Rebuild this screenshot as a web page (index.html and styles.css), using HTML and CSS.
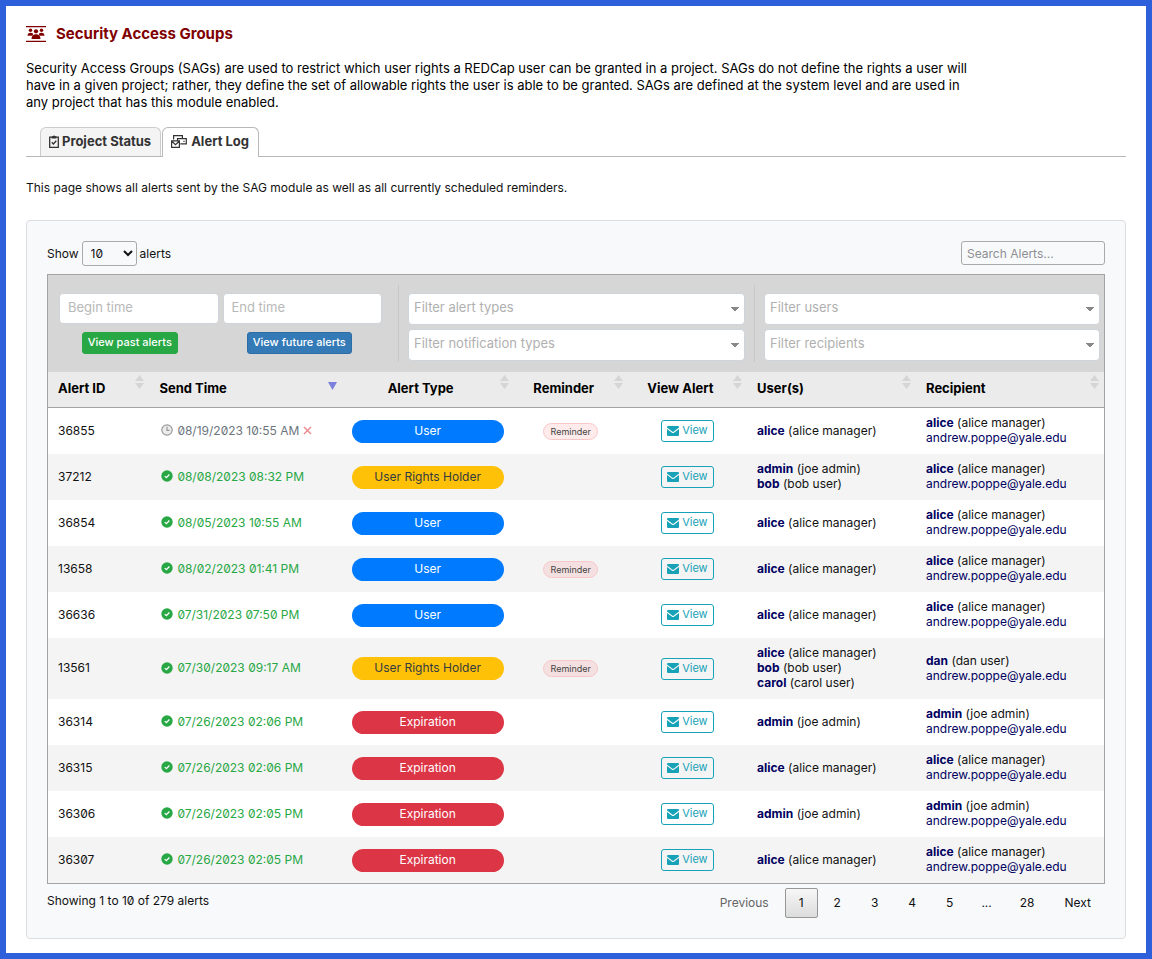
FILE: index.html
```html
<!DOCTYPE html>
<html lang="en">
<head>
<meta charset="utf-8">
<title>Security Access Groups</title>
<link rel="stylesheet" href="styles.css">
</head>
<body>
<svg class="sprite" aria-hidden="true">
  <symbol id="i-groups" viewBox="0 0 20 16">
    <path d="M0 0h20v1.300H0zM0 14.700h20V16H0z"/>
    <circle cx="4.500" cy="4.300" r="1.700"/><circle cx="15.500" cy="4.300" r="1.700"/><circle cx="10" cy="5.300" r="2.100"/>
    <path d="M1.500 9.700C1.500 7.800 2.700 6.700 4.500 6.700c1 0 1.900.3 2.500.9.100 1-.2 1.500-.8 2.100zM18.500 9.700c0-1.900-1.200-3-3-3-1 0-1.900.3-2.500.9-.1 1 .2 1.500.8 2.100zM5.500 13c0-3 1.600-4.800 4.500-4.800s4.500 1.800 4.500 4.800z"/>
  </symbol>
  <symbol id="i-clip" viewBox="0 0 10 13">
    <path d="M.7 2.200h8.600v10.100H.7zM2.800 7.300l1.600 1.700 2.900-3.300" fill="none" stroke="currentColor" stroke-width="1.300"/>
    <path d="M2.600 1.200h1.200a1.300 1.300 0 0 1 2.400 0h1.200v2.400H2.600z"/>
  </symbol>
  <symbol id="i-mails" viewBox="0 0 16 13">
    <path d="M2.600 4.500V.7h8.800v3M9.300 8.900h6V3.700H6.500v1.500M13 5.700v1.200M.6 5.900h7.800v6.400H.6zM.8 6.300l3.700 3.400 3.700-3.400" fill="none" stroke="currentColor" stroke-width="1.200"/>
  </symbol>
  <symbol id="i-clock" viewBox="0 0 12 12">
    <circle cx="6" cy="6" r="5.200" fill="#ececec" stroke="currentColor" stroke-width="1.200"/>
    <path d="M6 2.800V6.300h2.500" fill="none" stroke="currentColor" stroke-width="1.200"/>
  </symbol>
  <symbol id="i-check" viewBox="0 0 12 12">
    <circle cx="6" cy="6" r="5.700"/><path d="M3.700 6.100l1.700 1.600 3-3.200" fill="none" stroke="#fff" stroke-width="1.300"/>
  </symbol>
  <symbol id="i-x" viewBox="0 0 9 9"><path d="M1 1l7 7M8 1L1 8" fill="none" stroke="currentColor" stroke-width="1.500"/></symbol>
  <symbol id="i-mail" viewBox="0 0 12 10">
    <path d="M1 0h10a1 1 0 0 1 1 1v.5L6.800 5.600a1.300 1.300 0 0 1-1.600 0L0 1.500V1a1 1 0 0 1 1-1z"/>
    <path d="M0 2.900l4.700 3.700a2.100 2.100 0 0 0 2.600 0L12 2.900V9a1 1 0 0 1-1 1H1a1 1 0 0 1-1-1z"/>
  </symbol>
  <symbol id="i-sort" viewBox="0 0 9 14"><path d="M4.500 0L9 6H0zM0 8h9l-4.500 6z"/></symbol>
  <symbol id="i-down" viewBox="0 0 9 8"><path d="M0 0h9L4.500 8z"/></symbol>
</svg>

<main class="page">
  <h1 class="title"><svg class="title-icon"><use href="#i-groups"/></svg>Security Access Groups</h1>
  <p class="intro">Security Access Groups (SAGs) are used to restrict which user rights a REDCap user can be granted in a project. SAGs do not define the rights a user will have in a given project; rather, they define the set of allowable rights the user is able to be granted. SAGs are defined at the system level and are used in any project that has this module enabled.</p>

  <nav class="tabs">
    <a class="tab" href="#status"><svg class="clip-icon"><use href="#i-clip"/></svg>Project Status</a>
    <a class="tab tab-active" href="#alerts"><svg class="mails-icon"><use href="#i-mails"/></svg>Alert Log</a>
  </nav>
  <p class="note">This page shows all alerts sent by the SAG module as well as all currently scheduled reminders.</p>

  <section class="card">
    <div class="toolbar">
      <label class="length">Show <select class="length-select"><option>10</option><option>25</option><option>50</option></select> alerts</label>
      <input class="search" type="search" placeholder="Search Alerts..." aria-label="Search alerts">
    </div>

    <div class="grid-frame">
      <div class="filters">
        <div class="filter-group times">
          <input class="field" type="text" placeholder="Begin time" aria-label="Begin time">
          <input class="field" type="text" placeholder="End time" aria-label="End time">
          <button class="btn btn-past" type="button">View past alerts</button>
          <button class="btn btn-future" type="button">View future alerts</button>
        </div>
        <div class="filter-group">
          <select class="field picker" aria-label="Filter alert types"><option>Filter alert types</option></select>
          <select class="field picker" aria-label="Filter notification types"><option>Filter notification types</option></select>
        </div>
        <div class="filter-group">
          <select class="field picker" aria-label="Filter users"><option>Filter users</option></select>
          <select class="field picker" aria-label="Filter recipients"><option>Filter recipients</option></select>
        </div>
      </div>

      <table class="alerts">
        <colgroup><col class="c-id"><col class="c-time"><col class="c-type"><col class="c-rem"><col class="c-view"><col class="c-users"><col class="c-rec"></colgroup>
        <thead>
          <tr>
            <th>Alert ID<svg class="sort"><use href="#i-sort"/></svg></th>
            <th>Send Time<svg class="sort sort-on"><use href="#i-down"/></svg></th>
            <th class="mid">Alert Type<svg class="sort"><use href="#i-sort"/></svg></th>
            <th class="mid">Reminder<svg class="sort"><use href="#i-sort"/></svg></th>
            <th class="mid">View Alert<svg class="sort"><use href="#i-sort"/></svg></th>
            <th>User(s)<svg class="sort"><use href="#i-sort"/></svg></th>
            <th>Recipient<svg class="sort"><use href="#i-sort"/></svg></th>
          </tr>
        </thead>
        <tbody>
          <tr><td>36855</td><td><span class="when pending"><svg class="state"><use href="#i-clock"/></svg>08/19/2023 10:55 AM<button class="cancel" type="button" aria-label="Cancel reminder"><svg class="x-icon"><use href="#i-x"/></svg></button></span></td><td><span class="pill user">User</span></td><td class="mid"><span class="badge">Reminder</span></td><td class="mid"><button class="view" type="button"><svg class="mail"><use href="#i-mail"/></svg>View</button></td><td><b>alice</b> (alice manager)</td><td><b>alice</b> (alice manager)<br><a href="mailto:andrew.poppe@yale.edu">andrew.poppe@yale.edu</a></td></tr>
          <tr><td>37212</td><td><span class="when"><svg class="state"><use href="#i-check"/></svg>08/08/2023 08:32 PM</span></td><td><span class="pill holder">User Rights Holder</span></td><td></td><td class="mid"><button class="view" type="button"><svg class="mail"><use href="#i-mail"/></svg>View</button></td><td><b>admin</b> (joe admin)<br><b>bob</b> (bob user)</td><td><b>alice</b> (alice manager)<br><a href="mailto:andrew.poppe@yale.edu">andrew.poppe@yale.edu</a></td></tr>
          <tr><td>36854</td><td><span class="when"><svg class="state"><use href="#i-check"/></svg>08/05/2023 10:55 AM</span></td><td><span class="pill user">User</span></td><td></td><td class="mid"><button class="view" type="button"><svg class="mail"><use href="#i-mail"/></svg>View</button></td><td><b>alice</b> (alice manager)</td><td><b>alice</b> (alice manager)<br><a href="mailto:andrew.poppe@yale.edu">andrew.poppe@yale.edu</a></td></tr>
          <tr><td>13658</td><td><span class="when"><svg class="state"><use href="#i-check"/></svg>08/02/2023 01:41 PM</span></td><td><span class="pill user">User</span></td><td class="mid"><span class="badge">Reminder</span></td><td class="mid"><button class="view" type="button"><svg class="mail"><use href="#i-mail"/></svg>View</button></td><td><b>alice</b> (alice manager)</td><td><b>alice</b> (alice manager)<br><a href="mailto:andrew.poppe@yale.edu">andrew.poppe@yale.edu</a></td></tr>
          <tr><td>36636</td><td><span class="when"><svg class="state"><use href="#i-check"/></svg>07/31/2023 07:50 PM</span></td><td><span class="pill user">User</span></td><td></td><td class="mid"><button class="view" type="button"><svg class="mail"><use href="#i-mail"/></svg>View</button></td><td><b>alice</b> (alice manager)</td><td><b>alice</b> (alice manager)<br><a href="mailto:andrew.poppe@yale.edu">andrew.poppe@yale.edu</a></td></tr>
          <tr><td>13561</td><td><span class="when"><svg class="state"><use href="#i-check"/></svg>07/30/2023 09:17 AM</span></td><td><span class="pill holder">User Rights Holder</span></td><td class="mid"><span class="badge">Reminder</span></td><td class="mid"><button class="view" type="button"><svg class="mail"><use href="#i-mail"/></svg>View</button></td><td><b>alice</b> (alice manager)<br><b>bob</b> (bob user)<br><b>carol</b> (carol user)</td><td><b>dan</b> (dan user)<br><a href="mailto:andrew.poppe@yale.edu">andrew.poppe@yale.edu</a></td></tr>
          <tr><td>36314</td><td><span class="when"><svg class="state"><use href="#i-check"/></svg>07/26/2023 02:06 PM</span></td><td><span class="pill expired">Expiration</span></td><td></td><td class="mid"><button class="view" type="button"><svg class="mail"><use href="#i-mail"/></svg>View</button></td><td><b>admin</b> (joe admin)</td><td><b>admin</b> (joe admin)<br><a href="mailto:andrew.poppe@yale.edu">andrew.poppe@yale.edu</a></td></tr>
          <tr><td>36315</td><td><span class="when"><svg class="state"><use href="#i-check"/></svg>07/26/2023 02:06 PM</span></td><td><span class="pill expired">Expiration</span></td><td></td><td class="mid"><button class="view" type="button"><svg class="mail"><use href="#i-mail"/></svg>View</button></td><td><b>alice</b> (alice manager)</td><td><b>alice</b> (alice manager)<br><a href="mailto:andrew.poppe@yale.edu">andrew.poppe@yale.edu</a></td></tr>
          <tr><td>36306</td><td><span class="when"><svg class="state"><use href="#i-check"/></svg>07/26/2023 02:05 PM</span></td><td><span class="pill expired">Expiration</span></td><td></td><td class="mid"><button class="view" type="button"><svg class="mail"><use href="#i-mail"/></svg>View</button></td><td><b>admin</b> (joe admin)</td><td><b>admin</b> (joe admin)<br><a href="mailto:andrew.poppe@yale.edu">andrew.poppe@yale.edu</a></td></tr>
          <tr><td>36307</td><td><span class="when"><svg class="state"><use href="#i-check"/></svg>07/26/2023 02:05 PM</span></td><td><span class="pill expired">Expiration</span></td><td></td><td class="mid"><button class="view" type="button"><svg class="mail"><use href="#i-mail"/></svg>View</button></td><td><b>alice</b> (alice manager)</td><td><b>alice</b> (alice manager)<br><a href="mailto:andrew.poppe@yale.edu">andrew.poppe@yale.edu</a></td></tr>
        </tbody>
      </table>
    </div>

    <div class="footer">
      <p class="info">Showing 1 to 10 of 279 alerts</p>
      <nav class="pager" aria-label="Pages">
        <a class="pg pg-off">Previous</a>
        <a class="pg pg-on" href="#p1">1</a>
        <a class="pg" href="#p2">2</a>
        <a class="pg" href="#p3">3</a>
        <a class="pg" href="#p4">4</a>
        <a class="pg" href="#p5">5</a>
        <span class="dots">...</span>
        <a class="pg" href="#p28">28</a>
        <a class="pg" href="#next">Next</a>
      </nav>
    </div>
  </section>
</main>
</body>
</html>
```
FILE: styles.css
```css
* { box-sizing: border-box; }

body {
  margin: 0;
  min-height: 100vh;
  border: 6px solid #2f60db;
  background: #fff;
  color: #111;
  font: 12px/15px Inter, "Noto Sans", sans-serif;
  font-feature-settings: "zero";
}

input, select, button { font: inherit; font-feature-settings: inherit; margin: 0; }
a { color: inherit; text-decoration: none; }
svg { fill: currentColor; flex: none; }
p { margin: 0; }
.sprite { display: none; }

.page { padding: 18px 20px 14px; }

.title {
  display: flex;
  align-items: center;
  gap: 10px;
  margin: 0;
  color: #800000;
  font-size: 15px;
  line-height: 20px;
  font-weight: 700;
}
.title-icon { width: 20px; height: 16px; }

.intro {
  max-width: 950px;
  margin-top: 16px;
  font-size: 13px;
  line-height: 17px;
  color: #000;
}

.tabs {
  display: flex;
  align-items: flex-end;
  gap: 1px;
  margin-top: 16px;
  padding-left: 14px;
  border-bottom: 1px solid #b8b8b8;
}
.tab {
  display: flex;
  align-items: center;
  gap: 3px;
  height: 29px;
  padding: 0 9px 2px 8px;
  border: 1px solid #ccc;
  border-bottom: 0;
  border-radius: 6px 6px 0 0;
  background: #f4f4f4;
  color: #333;
  font-size: 13px;
  font-weight: 700;
}
.tab-active {
  gap: 4px;
  height: 30px;
  margin-bottom: -1px;
  padding-bottom: 3px;
  border-color: #b8b8b8;
  background: #fff;
}
.clip-icon { width: 10px; height: 13px; }
.mails-icon { width: 16px; height: 13px; }

.note { margin-top: 23px; }

.card {
  margin-top: 25px;
  padding: 20px;
  border: 1px solid #dcdde0;
  border-radius: 4px;
  background: #f8f9fb;
}

.toolbar {
  display: flex;
  align-items: flex-start;
  justify-content: space-between;
  margin-bottom: 8px;
}
.length { display: flex; align-items: center; gap: 3px; }
.length-select {
  width: 55px;
  height: 25px;
  padding: 0 0 0 4px;
  border: 1px solid #aaa;
  border-radius: 3px;
  background: transparent;
  color: #111;
}
.search {
  width: 144px;
  height: 24px;
  padding: 0 5px;
  border: 1px solid #aaa;
  border-radius: 3px;
  background: transparent;
}
.search::placeholder { color: #8d8f93; }

.grid-frame { border: 1px solid #a3a3a3; background: #fff; }

.filters {
  display: grid;
  grid-template-columns: 350fr 356fr 350fr;
  padding: 10px 0;
  background: #d6d6d6;
}
.filter-group {
  display: grid;
  gap: 4px;
  align-content: start;
  padding: 8px 9px 1px;
  border-left: 1px solid #c8c8c8;
}
.filter-group:last-child { padding-right: 4px; }
.times {
  grid-template-columns: 1fr 1fr;
  gap: 8px 4px;
  padding: 8px 16px 1px 10px;
  border-left-color: transparent;
}
.field {
  width: 100%;
  height: 31px;
  padding: 0 8px 3px;
  border: 1px solid #ced4da;
  border-radius: 4px;
  background-color: #fff;
  color: #b0b0b0;
  font-size: 13px;
}
.field::placeholder { color: #b8b8b8; }
.picker {
  appearance: none;
  height: 32px;
  padding: 0 20px 4px 5px;
  background-image: linear-gradient(to bottom right, #888 50%, transparent 50%), linear-gradient(to bottom left, #888 50%, transparent 50%);
  background-position: right 5px top 13px, right 9px top 13px;
  background-size: 4px 5px;
  background-repeat: no-repeat;
}
.btn {
  justify-self: center;
  height: 22px;
  padding: 0 5px 2px;
  border: 1px solid;
  border-radius: 3px;
  color: #fff;
  font-size: 11px;
  font-weight: 500;
}
.btn-past { border-color: #28a745; background: #28a745; margin-right: 18px; }
.btn-future { border-color: #2e6da4; background: #337ab7; margin-right: 6px; }

.alerts { width: 100%; table-layout: fixed; border-collapse: collapse; }
.c-id { width: 9.600%; }
.c-time { width: 18.200%; }
.c-type { width: 16.300%; }
.c-rem { width: 10.800%; }
.c-view { width: 11.300%; }
.c-users { width: 16%; }
.c-rec { width: 17.800%; }

.alerts th {
  position: relative;
  padding: 9px 24px 11px 10px;
  background: #ebebeb;
  border-bottom: 1px solid #a3a3a3;
  color: #000;
  font-size: 13px;
  font-weight: 700;
  text-align: left;
  white-space: nowrap;
}
.alerts td { padding: 7px 10px 9px; vertical-align: middle; white-space: nowrap; }
.alerts tbody tr:nth-child(even) { background: #f4f4f4; }
.alerts .mid { text-align: center; }
.alerts td:nth-child(n+3):nth-child(-n+5) { padding-top: 8px; padding-bottom: 8px; }
.alerts b, .alerts td a { color: #000060; }

.sort { position: absolute; top: 3px; right: 5px; width: 9px; height: 14px; color: #d5d5d5; }
.sort-on { top: 10px; height: 8px; color: #7a80dc; }

.when { display: flex; align-items: center; gap: 4px; padding-left: 2px; color: #28a745; }
.pending { color: #6c757d; }
.state { width: 12px; height: 12px; }
.pending .state { color: #999; }
.cancel { display: flex; padding: 0; border: 0; background: none; color: #ee8c95; }
.x-icon { width: 9px; height: 9px; }

.pill {
  display: block;
  height: 23px;
  border-radius: 12px;
  color: #fff;
  line-height: 22px;
  text-align: center;
}
.user { background: #007bff; }
.holder { background: #ffc107; color: #343a40; }
.expired { background: #dc3545; }

.badge {
  display: inline-block;
  padding: 0 6px;
  border: 1px solid #f8c8c9;
  border-radius: 9px;
  background: rgba(255, 0, 0, 0.08);
  color: #444;
  font-size: 9px;
  line-height: 15px;
  vertical-align: middle;
}
.view {
  display: inline-flex;
  align-items: center;
  gap: 3px;
  height: 22px;
  padding: 0 5px 1px;
  border: 1px solid #17a2b8;
  border-radius: 3px;
  background: transparent;
  color: #17a2b8;
  font-size: 11px;
  vertical-align: middle;
}
.mail { width: 12px; height: 10px; }

.footer { display: flex; justify-content: space-between; align-items: flex-start; padding-top: 4px; }
.info { padding-top: 5px; }
.pager { display: flex; gap: 2px; }
.pg {
  min-width: 20px;
  padding: 6px 13px 7px;
  border: 1px solid transparent;
  border-radius: 2px;
}
.pg-off { color: #666; }
.pg-on { border-color: #979797; background: linear-gradient(#f7f7f7, #dcdcdc); }
.dots { padding: 7px 12px; }
```
